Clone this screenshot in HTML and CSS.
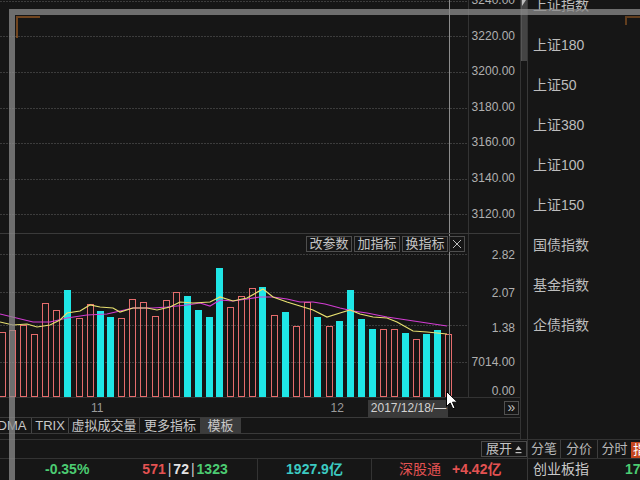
FILE: index.html
```html
<!DOCTYPE html>
<html lang="zh">
<head>
<meta charset="utf-8">
<title>K线</title>
<link rel="stylesheet" href="styles.css">
</head>
<body>
<div class="screen">
  <div class="main">
    <div class="chartwrap">
      <div class="left">
        <div class="pane price">
          <div class="plot">
            <svg width="468" height="233" viewBox="0 0 468 233">
              <g stroke="#3c3c3c" stroke-dasharray="2 1">
                <line x1="0" y1="1.5" x2="468" y2="1.5"/>
                <line x1="0" y1="36.5" x2="468" y2="36.5"/>
                <line x1="0" y1="72.5" x2="468" y2="72.5"/>
                <line x1="0" y1="108.5" x2="468" y2="108.5"/>
                <line x1="0" y1="143.5" x2="468" y2="143.5"/>
                <line x1="0" y1="179.5" x2="468" y2="179.5"/>
                <line x1="0" y1="214.5" x2="468" y2="214.5"/>
              </g>
              <line x1="449.5" y1="0" x2="449.5" y2="233" stroke="#8c8c8c"/>
            </svg>
          </div>
          <div class="axis price-axis">
            <div>3240.00</div>
            <div>3220.00</div>
            <div>3200.00</div>
            <div>3180.00</div>
            <div>3160.00</div>
            <div>3140.00</div>
            <div>3120.00</div>
          </div>
        </div>
        <div class="pane vol">
          <div class="plot">
            <svg width="468" height="163" viewBox="0 0 468 163">
              <g stroke="#3c3c3c" stroke-dasharray="2 1">
                <line x1="0" y1="20.5" x2="468" y2="20.5"/>
                <line x1="0" y1="58.5" x2="468" y2="58.5"/>
                <line x1="0" y1="91.5" x2="468" y2="91.5"/>
                <line x1="0" y1="128.5" x2="468" y2="128.5"/>
              </g>
              <g fill="none" stroke="#e46c6c">
                <rect x="-0.5" y="98.5" width="6" height="64"/>
                <rect x="9.5" y="96.5" width="6" height="66"/>
                <rect x="20.5" y="91.5" width="6" height="71"/>
                <rect x="31.5" y="100.5" width="6" height="62"/>
                <rect x="42.5" y="69.5" width="6" height="93"/>
                <rect x="53.5" y="76.5" width="6" height="86"/>
                <rect x="76.5" y="84.5" width="6" height="78"/>
                <rect x="87.5" y="70.5" width="6" height="92"/>
                <rect x="118.5" y="84.5" width="6" height="78"/>
                <rect x="129.5" y="65.5" width="6" height="97"/>
                <rect x="140.5" y="68.5" width="6" height="94"/>
                <rect x="152.5" y="82.5" width="6" height="80"/>
                <rect x="163.5" y="66.5" width="6" height="96"/>
                <rect x="173.5" y="58.5" width="6" height="104"/>
                <rect x="227.5" y="73.5" width="6" height="89"/>
                <rect x="238.5" y="62.5" width="6" height="100"/>
                <rect x="249.5" y="54.5" width="6" height="108"/>
                <rect x="271.5" y="81.5" width="6" height="81"/>
                <rect x="293.5" y="92.5" width="6" height="70"/>
                <rect x="304.5" y="68.5" width="6" height="94"/>
                <rect x="326.5" y="92.5" width="6" height="70"/>
                <rect x="380.5" y="95.5" width="6" height="67"/>
                <rect x="391.5" y="95.5" width="6" height="67"/>
                <rect x="413.5" y="105.5" width="6" height="57"/>
                <rect x="445.5" y="100.5" width="6" height="62"/>
              </g>
              <g fill="#1fe6e6">
                <rect x="64" y="56" width="7" height="107"/>
                <rect x="97" y="77" width="7" height="86"/>
                <rect x="107" y="83" width="7" height="80"/>
                <rect x="184" y="62" width="7" height="101"/>
                <rect x="195" y="76" width="7" height="87"/>
                <rect x="206" y="83" width="7" height="80"/>
                <rect x="216" y="34" width="7" height="129"/>
                <rect x="259" y="53" width="7" height="110"/>
                <rect x="282" y="78" width="7" height="85"/>
                <rect x="314" y="83" width="7" height="80"/>
                <rect x="336" y="87" width="7" height="76"/>
                <rect x="347" y="56" width="7" height="107"/>
                <rect x="358" y="85" width="7" height="78"/>
                <rect x="369" y="95" width="7" height="68"/>
                <rect x="402" y="99" width="7" height="64"/>
                <rect x="423" y="100" width="7" height="63"/>
                <rect x="434" y="96" width="7" height="67"/>
              </g>
              <polyline fill="none" stroke="#d23cd2" stroke-width="1.2" points="0,80 33,88 50,88 67,84 87,81 107,80 120,77 133,74 153,74 167,73 187,71 200,69 210,72 220,66 233,67 247,65 260,63 273,63 287,65 300,68 313,68 325,70 340,74 353,77 367,79 387,83 407,86 427,89 447,92"/>
              <polyline fill="none" stroke="#e8e070" stroke-width="1.2" points="0,88 13,91 27,90 37,93 50,91 60,86 67,79 80,77 90,71 100,73 113,74 120,78 133,74 147,74 157,76 170,73 180,68 193,69 210,68 220,63 233,67 247,64 263,55 273,63 287,68 300,72 313,76 327,83 340,79 350,76 360,80 373,83 387,84 397,88 413,97 427,98 447,100"/>
              <line x1="449.5" y1="0" x2="449.5" y2="163" stroke="#8c8c8c"/>
            </svg>
            <div class="toolbar">
              <span class="tbtn">改参数</span>
              <span class="tbtn">加指标</span>
              <span class="tbtn">换指标</span>
              <span class="tbtn close"><svg width="14" height="14" viewBox="0 0 14 14"><path d="M3 3L11 11M11 3L3 11" stroke="#bdbdbd" stroke-width="1" fill="none"/></svg></span>
            </div>
          </div>
          <div class="axis vol-axis">
            <div>2.82</div>
            <div>2.07</div>
            <div>1.38</div>
            <div>7014.00</div>
            <div>0.00</div>
          </div>
        </div>
        <div class="xaxis">
          <span class="tick t11">11</span>
          <span class="tick t12">12</span>
          <span class="datebox">2017/12/18/—</span>
          <span class="more">»</span>
        </div>
        <div class="tabs">
          <span class="tab w1">DMA</span>
          <span class="tab w2">TRIX</span>
          <span class="tab w3">虚拟成交量</span>
          <span class="tab w4">更多指标</span>
          <span class="tab w5 active">模板</span>
        </div>
      </div>
      <div class="scroll"><div class="thumb"></div></div>
    </div>
    <div class="bar">
      <span class="expand">展开<svg width="7" height="9" viewBox="0 0 7 9"><path d="M3.5 1L6.5 5H0.5Z" fill="#c0c0c0"/><rect x="0.5" y="7" width="6" height="1.2" fill="#c0c0c0"/></svg></span>
    </div>
    <div class="status">
      <div class="cell c1">
        <span class="green">-0.35%</span>
        <span class="counts"><span class="red">571</span><span class="pipe">|</span><span class="white">72</span><span class="pipe">|</span><span class="green">1323</span></span>
      </div>
      <div class="cell c2"><span class="teal">1927.9亿</span></div>
      <div class="cell c3"><span class="red normal">深股通</span><span class="red amt">+4.42亿</span></div>
    </div>
  </div>
  <div class="side">
    <div class="list">
      <ul>
        <li>上证指数</li>
        <li>上证180</li>
        <li>上证50</li>
        <li>上证380</li>
        <li>上证100</li>
        <li>上证150</li>
        <li>国债指数</li>
        <li>基金指数</li>
        <li>企债指数</li>
      </ul>
    </div>
    <div class="subtabs">
      <span class="st s1">分笔</span>
      <span class="st s2">分价</span>
      <span class="st s3">分时</span>
      <span class="st s4">指标</span>
    </div>
    <div class="side-status">
      <span class="idx">创业板指</span>
      <span class="green idxval">1758.47</span>
    </div>
  </div>

  <div class="sel-top"></div>
  <div class="sel-left"></div>
  <div class="corner-tl"></div>
  <div class="corner-tr"></div>
  <svg class="cursor" width="13" height="19" viewBox="0 0 13 19">
    <path d="M0.5 0.5V15.5L4.2 12L6.8 17.8L9 16.8L6.5 11.2H11.5Z" fill="#ffffff" stroke="#000000" stroke-width="1" stroke-linejoin="round"/>
  </svg>
</div>
</body>
</html>
```

FILE: styles.css
```css
* { box-sizing: border-box; }
html, body { margin: 0; padding: 0; }
body {
  background: #161616;
  font-family: "Liberation Sans", "Noto Sans CJK SC", sans-serif;
  color: #c0c0c0;
}
.screen {
  position: relative;
  width: 640px;
  height: 480px;
  overflow: hidden;
  display: flex;
  background: #161616;
}

/* main column */
.main {
  width: 528px;
  border-right: 1px solid #383838;
  display: flex;
  flex-direction: column;
}
.chartwrap { height: 439px; display: flex; }
.left {
  width: 521px;
  border-right: 1px solid #333;
  display: flex;
  flex-direction: column;
}
.scroll { width: 6px; position: relative; }
.thumb { height: 61px; background: #444; border-left: 1px solid #555; }
.scroll::before {
  content: "";
  position: absolute;
  left: 1px;
  top: 0;
  border-right: 4px solid transparent;
  border-top: 6px solid #bdbdbd;
}

.pane { display: flex; overflow: hidden; }
.price { height: 233px; }
.vol { height: 164px; border-top: 1px solid #3a3a3a; }
.plot {
  width: 469px;
  border-right: 1px solid #333;
  position: relative;
}
.plot svg { display: block; }
.axis {
  flex: 1;
  color: #b0b0b0;
  font-size: 12px;
  text-align: right;
  padding-right: 5px;
}
.price-axis { margin-top: -17px; }
.price-axis div { height: 35.6px; line-height: 35.6px; }
.vol-axis {
  display: grid;
  grid-template-rows: 38px 35px 34px 29px 14px;
  padding-top: 14px;
  line-height: 14px;
}

/* volume toolbar overlay */
.toolbar {
  position: absolute;
  left: 306px;
  top: 2px;
  display: flex;
  gap: 2px;
}
.tbtn {
  height: 16px;
  width: 46px;
  border: 1px solid #4e4e4e;
  font-size: 13px;
  line-height: 14px;
  color: #c4c4c4;
  text-align: center;
}
.tbtn.close {
  width: 16px;
  margin-left: -1px;
  display: flex;
  align-items: center;
  justify-content: center;
}

/* x axis */
.xaxis {
  height: 20px;
  border-top: 1px solid #333;
  display: flex;
  align-items: center;
  font-size: 12px;
  color: #9a9a9a;
}
.t11 { margin-left: 91px; }
.t12 { margin-left: 227px; }
.datebox {
  align-self: flex-end;
  margin-left: 24px;
  width: 80px;
  height: 17px;
  line-height: 17px;
  background: #3a3a3a;
  color: #d2d2d2;
  padding-left: 3px;
  white-space: nowrap;
  overflow: hidden;
}
.more {
  margin-left: 56px;
  width: 15px;
  height: 14px;
  border: 1px solid #505050;
  color: #c0c0c0;
  font-size: 14px;
  line-height: 11px;
  text-align: center;
}

/* indicator tabs */
.tabs {
  height: 17px;
  border-top: 1px solid #3a3a3a;
  border-bottom: 1px solid #3a3a3a;
  display: flex;
  font-size: 13px;
  line-height: 15px;
  color: #c8c8c8;
}
.tab { text-align: center; border-right: 1px solid #454545; white-space: nowrap; }
.w1 { width: 39px; margin-left: -7px; }
.w2 { width: 37px; }
.w3 { width: 71px; }
.w4 { width: 60px; border-right: none; }
.w5 { width: 41px; border-right: none; }
.tab.active { background: #3c3c3c; }

/* bottom bar */
.bar {
  height: 19px;
  border-top: 1px solid #333;
  display: flex;
  justify-content: flex-end;
  align-items: center;
}
.expand {
  width: 46px;
  height: 16px;
  border: 1px solid #4a4a4a;
  font-size: 13px;
  line-height: 14px;
  color: #c4c4c4;
  display: flex;
  align-items: center;
  justify-content: center;
  gap: 3px;
}

/* status row */
.status {
  height: 22px;
  border-top: 1px solid #333;
  display: flex;
  font-size: 14px;
  font-weight: bold;
  line-height: 21px;
}
.cell { white-space: nowrap; }
.c1 { width: 258px; border-right: 1px solid #333; padding-left: 45px; display: flex; }
.counts { margin-left: 53px; display: flex; gap: 2px; }
.c2 { width: 114px; border-right: 1px solid #333; text-align: center; }
.c3 { flex: 1; padding-left: 27px; display: flex; }
.amt { margin-left: 11px; }
.green { color: #4ccc72; }
.red { color: #e45252; }
.white { color: #e2e2e2; }
.pipe { color: #d0d0d0; font-weight: normal; }
.teal { color: #3ccac2; }
.normal { font-weight: normal; }

/* side panel */
.side { width: 112px; display: flex; flex-direction: column; }
.list {
  height: 439px;
  overflow: hidden;
}
.list ul {
  list-style: none;
  margin: -15px 0 0 0;
  padding: 0 0 0 5px;
  font-size: 14px;
  color: #bdbdbd;
}
.list li { height: 40px; line-height: 40px; white-space: nowrap; }
.subtabs {
  height: 19px;
  border-top: 1px solid #333;
  display: flex;
  font-size: 13px;
  line-height: 18px;
  color: #b8b8b8;
}
.st { text-align: center; white-space: nowrap; }
.s1 { width: 33px; border-right: 1px solid #3e3e3e; }
.s2 { width: 37px; border-right: 1px solid #3e3e3e; }
.s3 { width: 33px; }
.s4 {
  flex: 1;
  align-self: flex-end;
  height: 16px;
  line-height: 16px;
  background: #c4461f;
  color: #ffffff;
  text-align: left;
  padding-left: 2px;
  overflow: hidden;
}
.side-status {
  height: 22px;
  border-top: 1px solid #333;
  display: flex;
  padding-left: 5px;
  font-size: 14px;
  line-height: 21px;
  white-space: nowrap;
}
.idx { color: #c8c8c8; }
.idxval { margin-left: 36px; font-weight: bold; }

/* overlays: capture selection frame and pointer */
.sel-top {
  position: absolute;
  left: 9px;
  top: 9px;
  width: 631px;
  height: 6px;
  background: rgba(140, 140, 140, 0.75);
}
.sel-left {
  position: absolute;
  left: 9px;
  top: 15px;
  width: 6px;
  height: 465px;
  background: rgba(140, 140, 140, 0.75);
}
.corner-tl {
  position: absolute;
  left: 16px;
  top: 16px;
  width: 24px;
  height: 22px;
  border-top: 2px solid rgba(190, 110, 40, 0.55);
  border-left: 2px solid rgba(190, 110, 40, 0.55);
}
.corner-tr {
  position: absolute;
  left: 625px;
  top: 16px;
  width: 15px;
  height: 9px;
  border-top: 2px solid rgba(190, 110, 40, 0.45);
  border-left: 2px solid rgba(190, 110, 40, 0.45);
}
.cursor {
  position: absolute;
  left: 446px;
  top: 391px;
}
```
